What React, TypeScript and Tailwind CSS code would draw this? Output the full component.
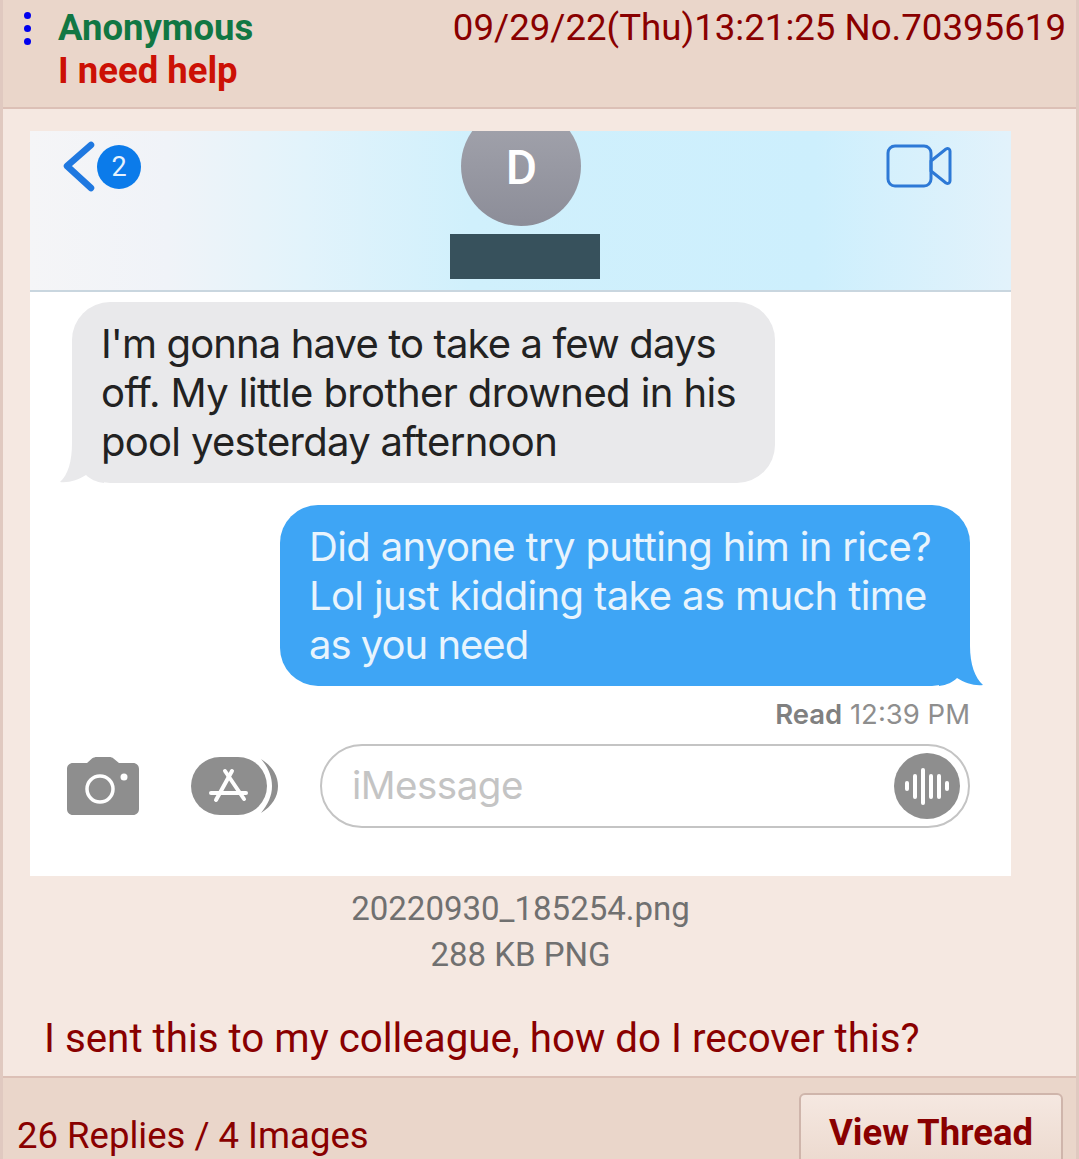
const roboto = { fontFamily: "Roboto, sans-serif" };

const CameraIcon = () => (
  <svg width="72" height="58" viewBox="0 0 72 58" className="block">
    <path
      fill="#8e8e8e"
      d="M6 6h14l5-4.500C26.500 0.500 28 0 30 0h12c2 0 3.500 0.500 4.500 1.500L52 6h14c3.500 0 6 2.500 6 6v40c0 3.500-2.500 6-6 6H6c-3.500 0-6-2.500-6-6V12c0-3.500 2.500-6 6-6Z"
    />
    <circle cx="33" cy="32" r="13" fill="none" stroke="#fff" strokeWidth="3.500" />
    <circle cx="57" cy="20" r="3.500" fill="#fff" />
  </svg>
);

const AppStoreIcon = () => (
  <svg width="90" height="60" viewBox="0 0 90 60" className="block">
    <path d="M72 3C83 10 89 19 89 30C89 41 83 50 72 57C79 48 83 40 83 30C83 20 79 11 72 3Z" fill="#8e8e8e" />
    <rect x="2" y="1" width="76" height="58" rx="29" fill="#8e8e8e" />
    <g stroke="#fff" strokeWidth="4" strokeLinecap="round" fill="none">
      <path d="M43 15L27 44" />
      <path d="M36 15L55 43" />
      <path d="M22 37H57" />
    </g>
  </svg>
);

const WaveIcon = () => (
  <div className="w-[66px] h-[66px] rounded-full bg-[#8e8e8e] flex items-center justify-center gap-[4px]">
    {[10, 25, 37, 25, 25, 10].map((h, i) => (
      <span key={i} className="w-[4px] rounded-full bg-white" style={{ height: h }} />
    ))}
  </div>
);

const VideoIcon = () => (
  <svg width="66" height="44" viewBox="0 0 66 44" className="block">
    <rect x="2" y="2" width="43" height="40" rx="7" fill="none" stroke="#2d79d6" strokeWidth="3" />
    <path d="M45 17l15-12c2-1 4 0 4 2v30c0 2-2 3-4 2L45 27Z" fill="none" stroke="#2d79d6" strokeWidth="3" strokeLinejoin="round" />
  </svg>
);

const Screenshot = () => (
  <div className="w-[981px] h-[745px] bg-white flex flex-col" style={{ fontFamily: "Inter, Roboto, sans-serif" }}>
    <div className="h-[161px] shrink-0 overflow-hidden border-b-2 border-[#c9d6df] grid grid-cols-3 bg-[linear-gradient(90deg,#f5f5f7_0%,#f0f3f8_14%,#e2f3fb_28%,#d0f0fc_45%,#cdeffd_80%,#e2f2fb_100%)]">
      <div className="pl-[33px] pt-[10px] flex items-start">
        <svg width="32" height="52" viewBox="0 0 32 52" className="block">
          <path d="M28 4L4 25L28 47" fill="none" stroke="#1f78e0" strokeWidth="6.500" strokeLinecap="round" strokeLinejoin="round" />
        </svg>
        <div className="mt-[4px] ml-[2px] w-[44px] h-[44px] rounded-full bg-[#0b7bea] text-[#e6f2fd] text-[27px] flex items-center justify-center" style={roboto}>
          2
        </div>
      </div>
      <div className="flex flex-col items-center">
        <div className="-mt-[25px] pt-[4px] pl-[2px] w-[120px] h-[120px] shrink-0 rounded-full bg-[linear-gradient(180deg,#a4a5ae,#8c8d98)] text-white text-[48px] font-medium flex items-center justify-center" style={roboto}>
          D
        </div>
        <div className="mt-[8px] ml-[8px] w-[150px] h-[45px] bg-[#37515c]" />
      </div>
      <div className="flex justify-end pr-[59px] pt-[13px]">
        <VideoIcon />
      </div>
    </div>

    <div className="flex-1 flex flex-col px-[41px] pt-[10px]">
      <div className="relative self-start ml-[1px] w-[703px] h-[181px] rounded-[38px] bg-[#e9e9eb] pl-[29px] pt-[17px] text-[40px] leading-[49px] text-[#222222] tracking-[-0.6px]">
        <svg width="45" height="40" viewBox="0 0 45 40" className="absolute -left-[12px] bottom-0">
          <path d="M12 0C12 18 8 32 0 39C9 40 18 37 26 32C30 36 36 39 44 40L44 0Z" fill="#e9e9eb" />
        </svg>
        <p className="relative tracking-[-0.87px]">I'm gonna have to take a few days</p>
        <p className="relative">off. My little brother drowned in his</p>
        <p className="relative tracking-[-0.7px]">pool yesterday afternoon</p>
      </div>

      <div className="relative self-end mt-[22px] w-[690px] h-[181px] rounded-[38px] bg-[#3ea5f5] pl-[29px] pt-[17px] text-[40px] leading-[49px] text-[#e8f4fd] tracking-[-0.65px]">
        <svg width="45" height="40" viewBox="0 0 45 40" className="absolute -right-[13px] bottom-0">
          <path d="M32 0C32 18 37 32 45 39C36 40 27 37 19 32C15 36 9 39 1 40L1 0Z" fill="#3ea5f5" />
        </svg>
        <p className="relative">Did anyone try putting him in rice?</p>
        <p className="relative">Lol just kidding take as much time</p>
        <p className="relative tracking-[-1px]">as you need</p>
      </div>

      <p className="self-end mt-[13px] text-[27.500px] leading-[30px] text-[#8e8e8e]">
        <span className="font-semibold text-[#808080]">Read</span> 12:39 PM
      </p>

      <div className="mt-[15px] flex items-center">
        <div className="-ml-[4px]">
          <CameraIcon />
        </div>
        <div className="ml-[50px]">
          <AppStoreIcon />
        </div>
        <div className="ml-[41px] w-[650px] h-[84px] rounded-full border-2 border-[#c4c4c4] flex items-center justify-between pl-[30px] pr-[8px]">
          <span className="text-[38.500px] text-[#c4c4c4] tracking-[-0.5px]">iMessage</span>
          <WaveIcon />
        </div>
      </div>
    </div>
  </div>
);

export default function App() {
  return (
    <div className="w-[1079px] h-[1159px] overflow-hidden bg-[#f5e8e1] border-x-[3px] border-[#e0c9c0] text-[#890000]" style={roboto}>
      <div className="h-[109px] bg-[#ead6ca] border-b-2 border-[#dcc0b6] flex justify-between pl-[17px] pr-[10px]">
        <div className="flex">
          <div className="pt-[12px] w-[14px] flex flex-col items-center gap-[6px]">
            <span className="w-[7px] h-[7px] rounded-full bg-[#0000ee]" />
            <span className="w-[7px] h-[7px] rounded-full bg-[#0000ee]" />
            <span className="w-[7px] h-[7px] rounded-full bg-[#0000ee]" />
          </div>
          <div className="ml-[24px] pt-[6px] text-[36.500px] leading-[43px] font-bold">
            <p className="text-[#117743]">Anonymous</p>
            <p className="text-[#cc1105]">I need help</p>
          </div>
        </div>
        <p className="pt-[5px] text-[36.650px] leading-[46px]">09/29/22(Thu)13:21:25 No.70395619</p>
      </div>

      <div className="pl-[27px] pt-[22px]">
        <Screenshot />
      </div>

      <div className="flex flex-col items-center w-[981px] ml-[27px] pt-[10px] text-[33px] leading-[46px] text-[#707070]">
        <p>20220930_185254.png</p>
        <p>288 KB PNG</p>
      </div>

      <p className="pl-[41px] pt-[36px] text-[40.300px] leading-[50px]">I sent this to my colleague, how do I recover this?</p>

      <div className="mt-[12px] h-[90px] bg-[#ead6ca] border-t-2 border-[#dcc0b6] flex justify-between pl-[14px] pr-[13px]">
        <p className="pt-[35px] text-[36.500px] leading-[46px]">26 Replies / 4 Images</p>
        <div className="mt-[15px] w-[264px] h-[90px] rounded-t-[6px] border-2 border-[#cfb5ab] bg-[linear-gradient(180deg,#f5e8e1,#ead6ca)] flex justify-center pt-[15px] text-[36.500px] leading-[46px] font-bold">
          View Thread
        </div>
      </div>
    </div>
  );
}
